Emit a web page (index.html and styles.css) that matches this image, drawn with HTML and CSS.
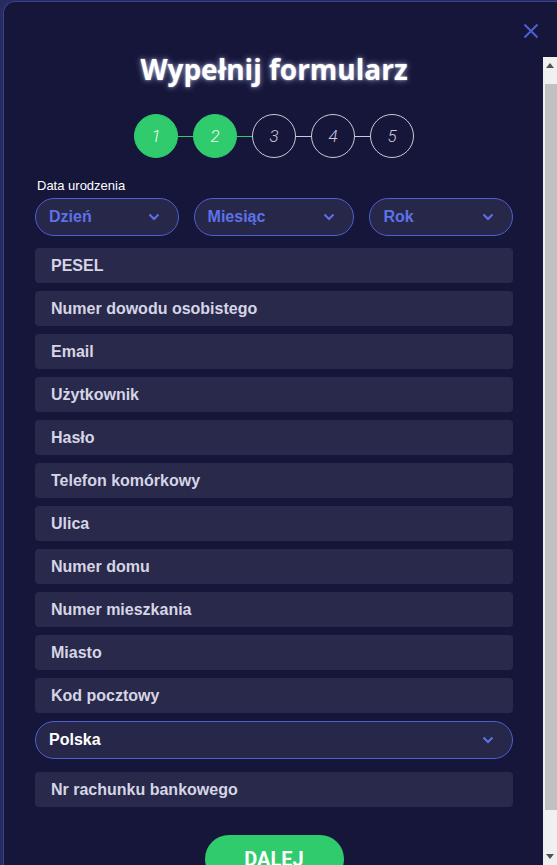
FILE: index.html
```html
<!DOCTYPE html>
<html lang="pl">
<head>
  <meta charset="UTF-8">
  <title>Wypełnij formularz</title>
  <link rel="stylesheet" href="styles.css">
</head>
<body>
  <div class="modal">
    <button class="close" aria-label="Zamknij">
      <svg width="16" height="16" viewBox="0 0 16 16"><path d="M1.5 1.5 L14.5 14.5 M14.5 1.5 L1.5 14.5" stroke="currentColor" stroke-width="2" fill="none"/></svg>
    </button>

    <div class="modal-main">
      <div class="modal-body">
        <h2 class="title">Wypełnij formularz</h2>

        <div class="steps">
          <span class="step done">1</span>
          <span class="line done"></span>
          <span class="step done">2</span>
          <span class="line done"></span>
          <span class="step">3</span>
          <span class="line"></span>
          <span class="step">4</span>
          <span class="line"></span>
          <span class="step">5</span>
        </div>

        <div class="label">Data urodzenia</div>
        <div class="date-row">
          <div class="select">Dzień <svg class="chev" width="12" height="8" viewBox="0 0 12 8"><path d="M1.5 1.5 L6 6 L10.5 1.5" stroke="currentColor" stroke-width="2" fill="none"/></svg></div>
          <div class="select">Miesiąc <svg class="chev" width="12" height="8" viewBox="0 0 12 8"><path d="M1.5 1.5 L6 6 L10.5 1.5" stroke="currentColor" stroke-width="2" fill="none"/></svg></div>
          <div class="select">Rok <svg class="chev" width="12" height="8" viewBox="0 0 12 8"><path d="M1.5 1.5 L6 6 L10.5 1.5" stroke="currentColor" stroke-width="2" fill="none"/></svg></div>
        </div>

        <input class="field" placeholder="PESEL">
        <input class="field" placeholder="Numer dowodu osobistego">
        <input class="field" placeholder="Email">
        <input class="field" placeholder="Użytkownik">
        <input class="field" placeholder="Hasło">
        <input class="field" placeholder="Telefon komórkowy">
        <input class="field" placeholder="Ulica">
        <input class="field" placeholder="Numer domu">
        <input class="field" placeholder="Numer mieszkania">
        <input class="field" placeholder="Miasto">
        <input class="field" placeholder="Kod pocztowy">

        <div class="select country">Polska <svg class="chev" width="12" height="8" viewBox="0 0 12 8"><path d="M1.5 1.5 L6 6 L10.5 1.5" stroke="currentColor" stroke-width="2" fill="none"/></svg></div>

        <input class="field" placeholder="Nr rachunku bankowego">

        <div class="actions">
          <button class="btn-next">DALEJ</button>
        </div>
      </div>

      <div class="scrollbar">
        <span class="sb-arrow"><svg width="8" height="5" viewBox="0 0 8 5"><path d="M0 5 L4 0 L8 5 Z" fill="#505050"/></svg></span>
        <span class="sb-track"><span class="sb-thumb"></span></span>
        <span class="sb-arrow"><svg width="8" height="5" viewBox="0 0 8 5"><path d="M0 0 L4 5 L8 0 Z" fill="#505050"/></svg></span>
      </div>
    </div>
  </div>
</body>
</html>
```

FILE: styles.css
```css
html, body { margin: 0; height: 100%; overflow: hidden; }
body { background-color: #272b5e; font-family: "Liberation Sans", Arial, sans-serif; }

.modal { position: relative; height: calc(100% - 1px); margin: 1px 0 0 3px; background-color: #16163a; border: 1px solid #3a4290; border-right: none; border-bottom: none; border-radius: 12px 0 0 0; box-sizing: border-box; }
.close { position: absolute; top: 21px; right: 18px; padding: 0; background: none; border: none; color: #4b5fd1; cursor: pointer; z-index: 1; }
.close svg { display: block; }

.modal-main { display: flex; height: calc(100% - 38px); margin-top: 38px; }
.modal-body { flex: 1; min-width: 0; overflow: hidden; padding: 17px 30px 35px 31px; }

/* classic scrollbar, as in the screenshot */
.scrollbar { width: 14px; margin-top: 17px; display: flex; flex-direction: column; background-color: #f0f0f0; }
.sb-arrow { height: 17px; display: flex; justify-content: center; align-items: center; flex: none; }
.sb-track { flex: 1; padding: 10px 0 38px 2px; display: flex; }
.sb-thumb { flex: 1; background-color: #c1c1c1; }

.title { margin: 0; text-align: center; font-family: "Open Sans", sans-serif; font-weight: 700; font-size: 28px; line-height: 24px; color: #fff; text-shadow: 0 0 6px rgba(200, 210, 255, 0.7), 0 0 2px rgba(255, 255, 255, 0.6); }

.steps { display: flex; justify-content: center; align-items: center; margin-top: 33px; }
.step { width: 44px; height: 44px; box-sizing: border-box; border: 1px solid #c9c9d9; border-radius: 50%; display: flex; justify-content: center; align-items: center; font-family: Roboto, sans-serif; font-style: italic; font-weight: 300; font-size: 17px; color: #c9c9d9; }
.step.done { background-color: #2fcb6d; border-color: #2fcb6d; color: #eefaf2; }
.line { width: 15px; height: 1px; background-color: #c9c9d9; }
.line.done { background-color: #2fcb6d; }

.label { margin-top: 20px; font-size: 13px; line-height: 15px; color: #fff; padding-left: 2px; }

.date-row { display: grid; grid-template-columns: 1fr 1.12fr 1fr; gap: 15px; margin-top: 5px; margin-bottom: 12px; }

.select { display: flex; justify-content: space-between; align-items: center; height: 38px; box-sizing: border-box; padding: 0 18px 0 13px; background-color: #272849; border: 1px solid #4c5fd3; border-radius: 19px; font-weight: 700; font-size: 16px; color: #5c72e8; }
.chev { color: #5c72e8; }
.select.country { margin: 0 0 13px; color: #fff; padding-right: 18px; }

.field { display: block; width: 100%; height: 35px; margin: 0 0 8px; padding: 0 16px; box-sizing: border-box; background-color: #29294b; border: none; border-radius: 4px; font-family: "Liberation Sans", Arial, sans-serif; font-weight: 700; font-size: 16px; color: #fff; outline: none; }
.field::placeholder { color: #d5d5e5; opacity: 1; }

.actions { display: flex; justify-content: center; margin-top: 28px; }
.btn-next { width: 139px; height: 48px; background-color: #2fcb6d; color: #fff; border: none; border-radius: 24px; font-family: Roboto, sans-serif; font-weight: 700; font-size: 20px; cursor: pointer; padding: 0; }
```
